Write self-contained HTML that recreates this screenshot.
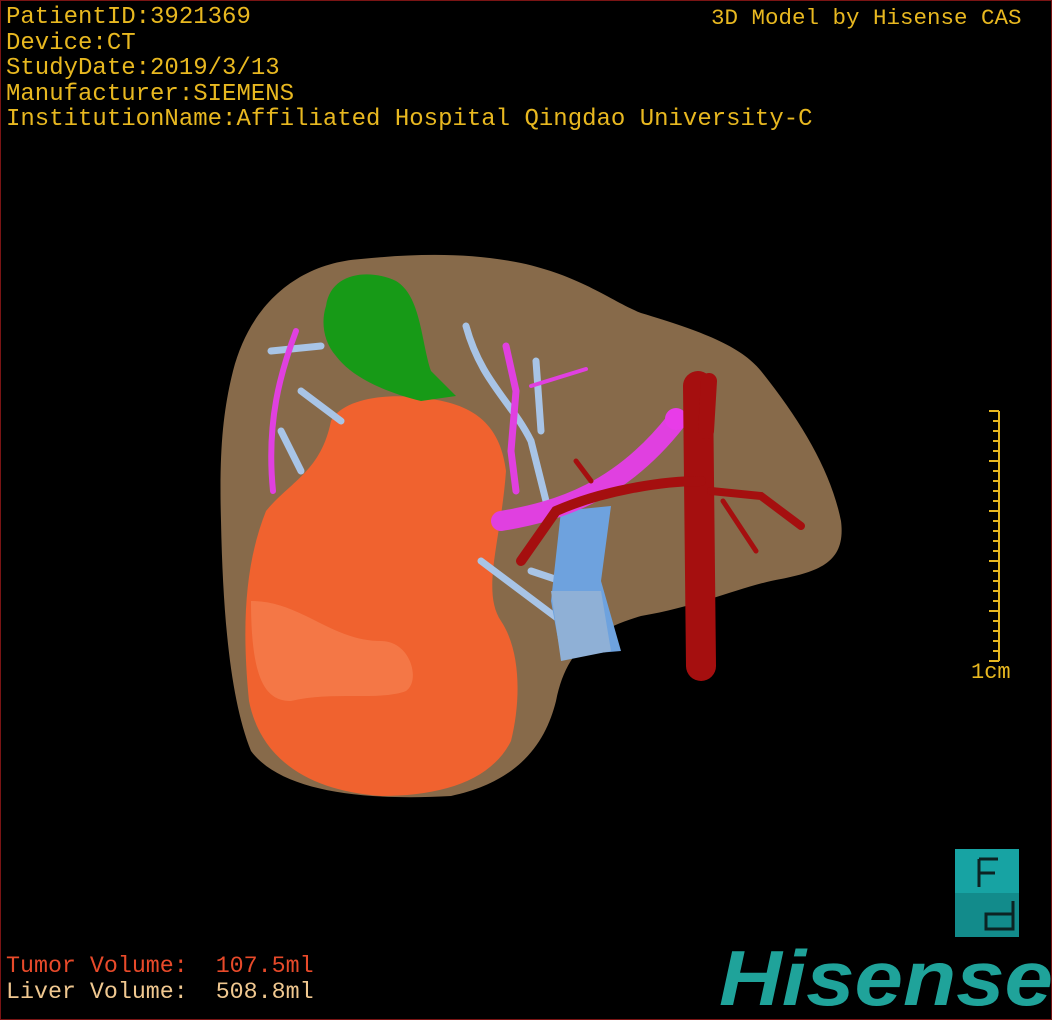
<!DOCTYPE html>
<html><head><meta charset="utf-8"><style>
html,body{margin:0;padding:0;background:#000}
#w{position:relative;width:1050px;height:1018px;border:1px solid #7a1414;overflow:hidden;background:#000}
.t{position:absolute;font-family:"Liberation Mono",monospace;font-size:24px;line-height:25.5px;color:#e8b820;white-space:pre}
</style></head><body><div id="w">
<div class="t" style="left:5px;top:4px">PatientID:3921369<br>Device:CT<br>StudyDate:2019/3/13<br>Manufacturer:SIEMENS<br>InstitutionName:Affiliated Hospital Qingdao University-C</div>
<div class="t" style="left:710px;top:5px;font-size:22.5px">3D Model by Hisense CAS</div>
<div class="t" style="left:5px;top:953px;font-size:23.3px;color:#e84a2a">Tumor Volume:  107.5ml</div>
<div class="t" style="left:5px;top:979px;font-size:23.3px;color:#f0c890">Liver Volume:  508.8ml</div>
<div class="t" style="left:970px;top:659px;font-size:22px">1cm</div>
<svg width="1050" height="1018" style="position:absolute;left:0;top:0">
<g stroke="#e8b820" stroke-width="2" fill="none">
<path d="M998 410V660"/>
<path d="M988 410h10M988 460h10M988 510h10M988 560h10M988 610h10M988 660h10"/>
<path d="M992 420h6M992 430h6M992 440h6M992 450h6M992 470h6M992 480h6M992 490h6M992 500h6M992 520h6M992 530h6M992 540h6M992 550h6M992 570h6M992 580h6M992 590h6M992 600h6M992 620h6M992 630h6M992 640h6M992 650h6"/>
</g>
<path d="M232 370 C250 300 300 262 360 258 C420 252 470 252 520 262 C580 275 610 300 640 312 C700 330 740 345 760 370 C800 420 830 470 840 520 C845 560 820 570 780 578 C740 585 700 605 640 615 C590 630 565 650 555 700 C545 740 520 780 450 795 C360 800 280 790 250 750 C230 700 222 620 220 520 C218 450 222 410 232 370Z" fill="#876a4a"/>
<path d="M330 420 C340 400 380 390 430 398 C480 405 500 430 505 470 C500 540 480 590 500 620 C520 650 520 700 510 740 C490 780 440 795 380 795 C310 790 260 760 248 700 C240 620 245 560 265 510 C290 480 320 470 330 420Z" fill="#f0622f"/>
<path d="M250 600 C300 600 330 640 380 640 C410 640 420 680 405 690 C380 700 330 690 290 700 C265 700 250 680 250 600Z" fill="#f58050" opacity=".7"/>
<g stroke="#a8c4e6" stroke-width="7" fill="none" stroke-linecap="round">
<path d="M270 350 L320 345"/><path d="M300 390 L340 420"/><path d="M280 430 L300 470"/>
<path d="M465 325 C480 380 510 400 530 440 L545 500"/><path d="M535 360 L540 430"/>
<path d="M480 560 L560 620"/><path d="M530 570 L560 580"/>
</g>
<path d="M560 510 L610 505 L600 580 L620 650 L560 655 L550 600Z" fill="#6ea2de"/>
<path d="M550 590 L600 590 L610 650 L560 660Z" fill="#8fb0d6"/>
<g stroke="#e040e0" fill="none" stroke-linecap="round">
<path d="M295 330 C280 370 265 420 272 490" stroke-width="6"/>
<path d="M505 345 L515 390 L510 450 L515 490" stroke-width="7"/>
<path d="M530 385 L585 368" stroke-width="4"/>
<path d="M500 520 C560 510 620 490 675 420" stroke-width="20"/>
</g>
<circle cx="675" cy="418" r="11" fill="#e83ce8"/>
<path d="M325 305 C330 270 370 268 395 280 C420 295 420 340 430 370 L455 395 L420 400 C380 390 350 375 335 355 C322 340 320 320 325 305Z" fill="#179a17"/>
<g stroke="#a50f0f" fill="none" stroke-linecap="round">
<path d="M697 385 L700 665" stroke-width="30"/>
<path d="M708 380 L705 430" stroke-width="16"/>
<path d="M700 480 C660 480 600 490 555 510 L520 560" stroke-width="10"/>
<path d="M575 460 L590 480" stroke-width="5"/>
<path d="M710 490 L760 495 L800 525" stroke-width="8"/>
<path d="M722 500 L755 550" stroke-width="5"/>
</g>
<rect x="954" y="848" width="64" height="44" fill="#17a3a3"/>
<rect x="954" y="892" width="64" height="44" fill="#128b8b"/>
<path d="M978 858 V886 M978 858 H997 M978 872 H994" stroke="#0c2222" stroke-width="3" fill="none"/>
<path d="M1012 900 V928 H985 V913 H1012" stroke="#0c2222" stroke-width="3" fill="none"/>
<text x="718" y="1004" font-family="Liberation Sans,sans-serif" font-weight="bold" font-style="italic" font-size="78" fill="#1fa39a" textLength="334" lengthAdjust="spacingAndGlyphs">Hisense</text>
</svg>
</div></body></html>
